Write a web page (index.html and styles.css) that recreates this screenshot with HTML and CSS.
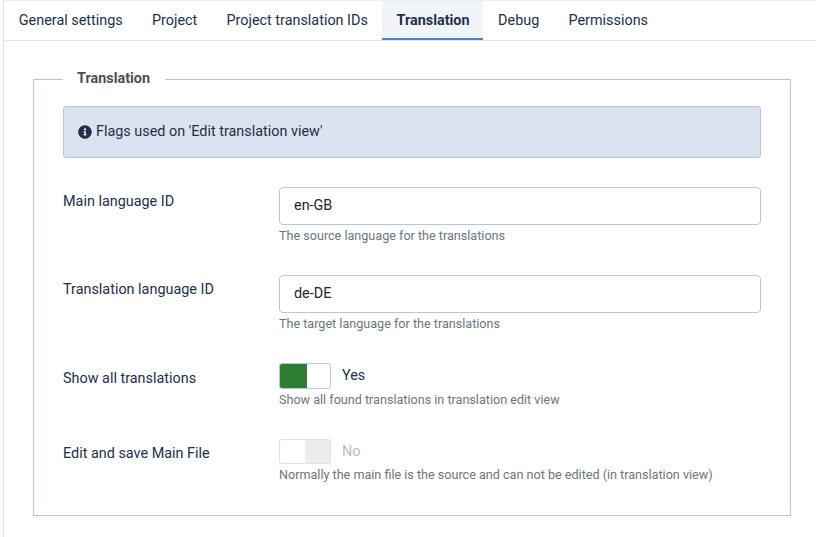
FILE: index.html
```html
<!DOCTYPE html>
<html lang="en">
<head>
<meta charset="utf-8">
<title>Translation options</title>
<link rel="stylesheet" href="styles.css">
</head>
<body>
<main class="panel">
  <nav class="tabs">
    <a class="tab">General settings</a>
    <a class="tab">Project</a>
    <a class="tab">Project translation IDs</a>
    <a class="tab active">Translation</a>
    <a class="tab">Debug</a>
    <a class="tab">Permissions</a>
  </nav>
  <fieldset class="options">
    <legend>Translation</legend>
    <div class="notice">
      <svg class="info" viewBox="0 0 512 512"><path fill="currentColor" d="M256 8C119 8 8 119 8 256s111 248 248 248 248-111 248-248S393 8 256 8zm0 110c23.200 0 42 18.800 42 42s-18.800 42-42 42-42-18.800-42-42 18.800-42 42-42zm56 254c0 6.600-5.400 12-12 12h-88c-6.600 0-12-5.400-12-12v-24c0-6.600 5.400-12 12-12h12v-64h-12c-6.600 0-12-5.400-12-12v-24c0-6.600 5.400-12 12-12h64c6.600 0 12 5.400 12 12v100h12c6.600 0 12 5.400 12 12v24z"/></svg>
      <span>Flags used on 'Edit translation view'</span>
    </div>
    <div class="row text-row">
      <label class="name">Main language ID</label>
      <div class="control"><input class="field" type="text" value="en-GB"><small>The source language for the translations</small></div>
    </div>
    <div class="row text-row">
      <label class="name">Translation language ID</label>
      <div class="control"><input class="field" type="text" value="de-DE"><small>The target language for the translations</small></div>
    </div>
    <div class="row switch-row">
      <span class="name">Show all translations</span>
      <div class="control"><div class="switcher"><span class="toggle on"></span><span class="state">Yes</span></div><small>Show all found translations in translation edit view</small></div>
    </div>
    <div class="row switch-row last">
      <span class="name">Edit and save Main File</span>
      <div class="control"><div class="switcher disabled"><span class="toggle"></span><span class="state">No</span></div><small>Normally the main file is the source and can not be edited (in translation view)</small></div>
    </div>
  </fieldset>
</main>
</body>
</html>
```
FILE: styles.css
```css
* { box-sizing: border-box; }
body {
  margin: 0;
  background: #fff;
  color: #22262a;
  font: 14.4px/22px Roboto, sans-serif;
}
.panel {
  height: 537px;
  margin-left: 3px;
  border-left: 1px solid #dfe3ee;
  overflow: hidden;
}
.tabs {
  display: flex;
  height: 41px;
  border-top: 1px solid #eaeef6;
  border-bottom: 1px solid #dce4f0;
  color: #22304a;
}
.tab {
  padding: 9px 14.4px 0 14.8px;
  height: 39px;
  white-space: nowrap;
}
.tab.active {
  width: 101px;
  padding-left: 14.2px;
  padding-right: 0;
  font-weight: 700;
  background: #f1f5f9;
  border-bottom: 2px solid #4a84c4;
}
.options {
  position: relative;
  width: 758px;
  height: 437px;
  margin: 38px 0 0 29px;
  padding: 26px 29px 0;
  border: 1px solid #b6c5e0;
}
.options legend {
  position: absolute;
  top: -12px;
  left: 29px;
  width: 102px;
  padding: 0 0 0 14px;
  background: #fff;
  color: #495057;
  font-weight: 700;
}
.notice {
  display: flex;
  align-items: center;
  gap: 4px;
  height: 52px;
  padding: 0 14px;
  border: 1px solid #b6c5e0;
  border-radius: 3px;
  background: #dce3f0;
  color: #22304a;
}
.info { width: 14px; height: 14px; }
.row { display: grid; grid-template-columns: 216px 1fr; }
.text-row { height: 88px; }
.notice + .row { margin-top: 29px; }
.name { padding-top: 4px; color: #22304a; }
.field {
  display: block;
  width: 100%;
  height: 38px;
  padding: 0 14px 2px;
  border: 1px solid #b6c5e0;
  border-radius: 4px;
  color: #22262a;
  font: inherit;
}
small {
  display: block;
  margin-top: 1px;
  font-size: 12.6px;
  line-height: 20px;
  color: #6d757e;
}
.switch-row { height: 76px; }
.switch-row .name { padding-top: 5px; }
.switch-row.last .name { padding-top: 4px; }
.switcher { display: flex; height: 26px; gap: 11px; color: #22304a; }
.state { padding-top: 2px; }
.toggle {
  width: 52px;
  height: 26px;
  border: 1px solid #b6c5e0;
  border-radius: 3px;
  background: linear-gradient(90deg, #fff 25px, #dadada 25px);
}
.toggle.on { background: linear-gradient(90deg, #2f7d32 27px, #fff 27px); }
.disabled { height: 25px; }
.disabled .toggle { height: 25px; opacity: .5; }
.disabled .state { color: #b6bcc6; }
```
